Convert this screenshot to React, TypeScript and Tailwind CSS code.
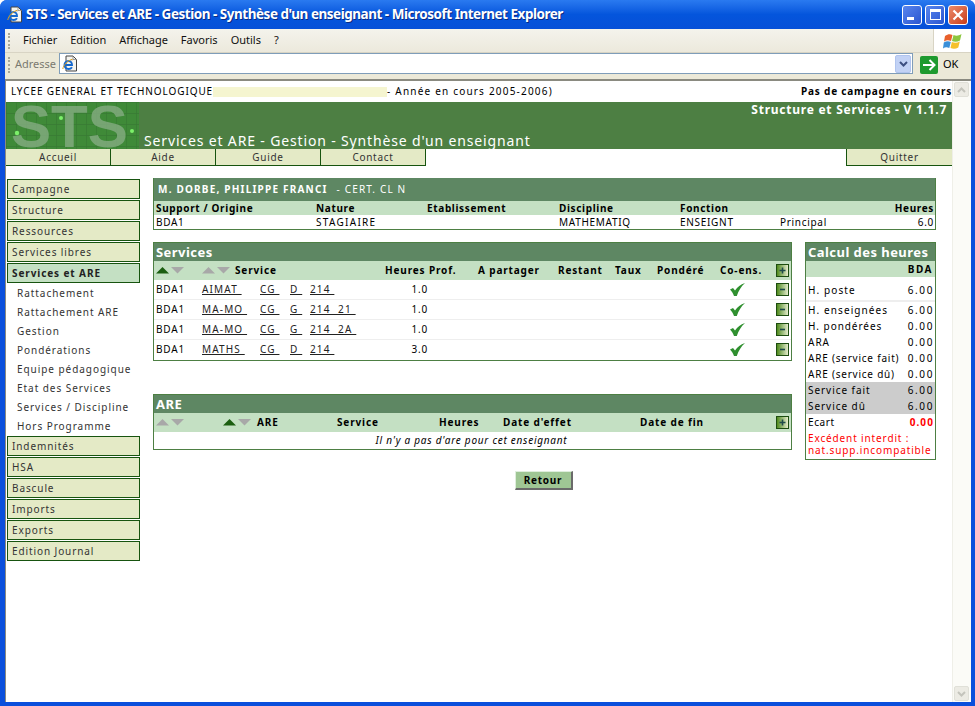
import type { ReactNode } from "react"

const sideTop = ["Campagne", "Structure", "Ressources", "Services libres"]
const sideSub = ["Rattachement", "Rattachement ARE", "Gestion", "Pondérations", "Equipe pédagogique", "Etat des Services", "Services / Discipline", "Hors Programme"]
const sideBottom = ["Indemnités", "HSA", "Bascule", "Imports", "Exports", "Edition Journal"]
const services = [
  { mat: "AIMAT ", gr: "D ", code: "214 ", h: "1.0" },
  { mat: "MA-MO ", gr: "G ", code: "214  21 ", h: "1.0" },
  { mat: "MA-MO ", gr: "G ", code: "214  2A ", h: "1.0" },
  { mat: "MATHS ", gr: "D ", code: "214 ", h: "3.0" },
]
const calcRows = [
  ["H. enseignées", "6.00", "tracking-[1.1px]"],
  ["H. pondérées", "0.00", "tracking-[0.95px]"],
  ["ARA", "0.00", "tracking-[1px]"],
  ["ARE (service fait)", "0.00", "tracking-[0.78px]"],
  ["ARE (service dû)", "0.00", "tracking-[0.78px]"],
]

function Arrows({ up = false }: { up?: boolean }) {
  return (
    <svg width="28" height="7" viewBox="0 0 28 7" className="shrink-0">
      <path d="M0 6.5 L6.5 0 L13 6.5 Z" fill={up ? "#1b5e10" : "#a8a8a8"} />
      <path d="M15 0 L28 0 L21.5 6.5 Z" fill="#a8a8a8" />
    </svg>
  )
}

function AddBtn({ minus = false }: { minus?: boolean }) {
  return (
    <div className="w-[13px] h-[13px] border border-[#1d4d10] bg-linear-to-r from-[#4f8a14] to-[#e6eccc] flex items-center justify-center">
      <svg width="7" height="7" viewBox="0 0 7 7">
        <path d={minus ? "M1 3.5H6" : "M0.5 3.5H6.5M3.5 0.5V6.5"} stroke="#1f4a4a" strokeWidth="1.6" />
      </svg>
    </div>
  )
}

function Check() {
  return (
    <svg width="15" height="13" viewBox="0 0 15 13" className="-mt-[1px]">
      <path d="M0 6.5 L3 5 L5 7.5 C7.5 4 10.5 1.5 15 0 C11 3.5 8.5 8 6.8 13 L4 13 C3.2 10.5 1.8 8.5 0 6.5 Z" fill="#2f8f2f" />
    </svg>
  )
}

function SideItem({ label, active = false }: { label: string; active?: boolean }) {
  return (
    <div className={`h-5 border border-[#17540f] pl-[4px] flex items-center tracking-[0.9px] ${active ? "bg-[#c4e0c3] font-bold text-[#222]" : "bg-[#e4eac6] text-[#333]"}`}>
      {label}
    </div>
  )
}

function PanelTitle({ children }: { children: ReactNode }) {
  return <div className="h-[18px] pt-[1px] bg-[#5e8763] text-white text-[13px] font-bold pl-[2px] flex items-center tracking-[0.45px]">{children}</div>
}

function Link({ text }: { text: string }) {
  return <span className="underline whitespace-pre tracking-[1.15px] text-[#222]">{text}</span>
}

function IeIcon() {
  return (
    <svg width="16" height="17" viewBox="0 0 16 17" className="shrink-0">
      <path d="M4 1H11L14.5 4.5V16H4Z" fill="#f4f4f0" stroke="#444" strokeWidth="1" />
      <path d="M10 5.5 V4.5 M11 1V4.5H14.5" fill="none" stroke="#888" strokeWidth="0.8" />
      <path d="M3 10H10C10 7.5 8.5 6 6.5 6C4.2 6 2.5 8 2.5 10C2.5 12.5 4.2 14 6.5 14C8 14 9.2 13.4 10 12.2" fill="none" stroke="#1468d0" strokeWidth="1.9" />
      <path d="M0.8 14C1.5 10 5.5 5.5 10.5 4.2" fill="none" stroke="#e0a020" strokeWidth="1" />
    </svg>
  )
}

export default function App() {
  return (
    <div className="w-[975px] h-[706px] overflow-hidden flex flex-col bg-[#0a4fdc] rounded-t-[7px] font-['DejaVu_Sans',sans-serif] text-[10px] text-black">
      {/* title bar */}
      <div className="h-[29px] shrink-0 bg-linear-to-b from-[#2a7af0] via-[#0455dc] to-[#0650d8] flex items-center pl-[7px] pr-[7px]">
        <IeIcon />
        <span className="ml-[3px] font-['Roboto',sans-serif] font-bold text-[13.5px] text-white tracking-[-0.48px] [text-shadow:1px_1px_0_#0a2a80] whitespace-pre">STS - Services et ARE - Gestion - Synthèse d'un enseignant - Microsoft Internet Explorer</span>
        <div className="ml-auto flex gap-[3px]">
          <div className="w-[20px] h-[20px] rounded-[3px] border border-white bg-linear-to-br from-[#5a86ee] to-[#2a55d0] flex items-end pl-1 pb-1">
            <div className="w-[7px] h-[3px] bg-white" />
          </div>
          <div className="w-[20px] h-[20px] rounded-[3px] border border-white bg-linear-to-br from-[#5a86ee] to-[#2a55d0] flex items-center justify-center">
            <div className="w-[11px] h-[11px] border border-white border-t-[3px]" />
          </div>
          <div className="w-[20px] h-[20px] rounded-[3px] border border-white bg-linear-to-br from-[#eb8a6a] to-[#c83a14] flex items-center justify-center">
            <svg width="12" height="12" viewBox="0 0 12 12"><path d="M1.5 1.5L10.5 10.5M10.5 1.5L1.5 10.5" stroke="#fff" strokeWidth="2.2" /></svg>
          </div>
        </div>
      </div>

      <div className="flex-1 ml-[5px] mr-[4px] mb-[4px] flex flex-col min-h-0 bg-[#ece9d8]">
        {/* menu bar */}
        <div className="h-[24px] shrink-0 bg-linear-to-b from-[#f4f3ec] to-[#ece9dc] border-b border-[#d8d4c4] flex items-center font-['Liberation_Sans',sans-serif] text-[11px]">
          <div className="ml-[3px] w-[3px] h-[16px] border-l-2 border-dotted border-[#a8a698]" />
          <div className="ml-[12px] flex gap-[13px] text-[#111]">
            <span>Fichier</span><span>Edition</span><span>Affichage</span><span>Favoris</span><span>Outils</span><span>?</span>
          </div>
          <div className="ml-auto w-[38px] h-full bg-white border-l border-[#d8d4c4] flex items-center justify-center">
            <svg width="20" height="18" viewBox="0 0 20 18">
              <path d="M2 4C5 2 7 2 9.5 3L8 9C5.5 8 3.5 8 1 9.5Z" fill="#e8602c" />
              <path d="M10.5 3C13 4 15.5 4 18.5 2L17 8.5C14.5 10 11.5 10 9 9Z" fill="#8cc63f" />
              <path d="M0.8 10.5C3.5 9 5.5 9 7.8 10L6.3 16C4 15 2 15 0 16.5Z" fill="#3a8fd8" />
              <path d="M8.8 10C11.5 11 14 11 16.8 9.5L15.3 15.5C12.8 17 10 17 7.5 16Z" fill="#f5c02c" />
            </svg>
          </div>
        </div>
        {/* address bar */}
        <div className="h-[26px] shrink-0 flex items-center font-['Liberation_Sans',sans-serif] text-[11px] bg-[#ece9d8]">
          <div className="ml-[3px] -mt-[3px] w-[3px] h-[16px] border-l-2 border-dotted border-[#a8a698]" />
          <span className="ml-[4px] -mt-[3px] text-[#7a7a70] w-[44px]">Adresse</span>
          <div className="w-[854px] h-[21px] -mt-[5px] bg-white border border-[#7f9db9] flex items-center pl-[2px] pr-[1px]">
            <IeIcon />
            <div className="ml-auto w-[16px] h-[18px] rounded-[2px] bg-[#c2d2f5] border border-[#b0c4ee] flex items-center justify-center">
              <svg width="9" height="6" viewBox="0 0 9 6"><path d="M1 1L4.5 4.5L8 1" fill="none" stroke="#3c4f80" strokeWidth="2" /></svg>
            </div>
          </div>
          <div className="ml-[7px] w-[18px] h-[18px] -mt-[3px] rounded-[2px] bg-[#1e9a2e] flex items-center justify-center">
            <svg width="14" height="12" viewBox="0 0 14 12"><path d="M1 6H12M7.5 1L12.5 6L7.5 11" fill="none" stroke="#fff" strokeWidth="2" /></svg>
          </div>
          <span className="ml-[5px] -mt-[3px]">OK</span>
        </div>

        {/* page */}
        <div className="flex-1 min-h-0 flex bg-white border-t-2 border-t-[#8a8a80] border-l border-l-[#8a8a80]">
          <div className="flex-1 min-w-0 flex flex-col">
            <div className="h-[21px] shrink-0 flex items-center pl-[5px] tracking-[0.9px] whitespace-pre">
              <span>LYCEE GENERAL ET TECHNOLOGIQUE</span>
              <span className="w-[174px] h-[10px] bg-[#f5f5d0]" />
              <span className="tracking-[1.2px]">- Année en cours 2005-2006)</span>
              <span className="ml-auto font-bold tracking-[0.8px]">Pas de campagne en cours</span>
            </div>
            <div className="h-[47px] shrink-0 bg-[#4d7f43] flex relative">
              <svg width="133" height="47" viewBox="0 0 133 47" className="shrink-0">
                <defs>
                  <pattern id="cells" width="10" height="11" patternUnits="userSpaceOnUse">
                    <rect width="10" height="11" fill="#3f8a38" />
                    <path d="M0 0H10M0 0V11" stroke="#387a33" strokeWidth="1.4" />
                  </pattern>
                </defs>
                <rect width="133" height="47" fill="url(#cells)" />
                <text x="5" y="45" fontFamily="Liberation Sans" fontWeight="700" fontSize="60" fill="#86ad84" fillOpacity="0.78" textLength="117" lengthAdjust="spacingAndGlyphs">STS</text>
                <circle cx="55" cy="16" r="2" fill="#7cf06a" />
                <circle cx="11" cy="31" r="2.2" fill="#7cf06a" />
                <circle cx="126" cy="29" r="2" fill="#7cf06a" />
              </svg>
              <span className="self-end ml-[5px] text-white text-[14px] tracking-[0.85px] leading-[17px] whitespace-pre">Services et ARE - Gestion - Synthèse d'un enseignant</span>
              <span className="absolute right-[5px] top-[1px] text-white font-bold text-[12px] leading-[14px] tracking-[0.75px]">Structure et Services - V 1.1.7</span>
            </div>
            <div className="h-[17px] shrink-0 flex text-[#333] tracking-[0.7px]">
              {["Accueil", "Aide", "Guide", "Contact"].map((t) => (
                <div key={t} className="w-[105px] bg-[#e4eac6] border-r border-b border-[#17540f] flex items-center justify-center">{t}</div>
              ))}
              <div className="ml-auto w-[106px] bg-[#e4eac6] border-l border-b border-[#17540f] flex items-center justify-center">Quitter</div>
            </div>

            <div className="flex-1 min-h-0 flex pl-[1px] pt-[13px]">
              {/* sidebar */}
              <div className="w-[133px] shrink-0 flex flex-col gap-[1px]">
                {sideTop.map((s) => <SideItem key={s} label={s} />)}
                <SideItem label="Services et ARE" active />
                <div className="flex flex-col -mb-[1px] pl-[10px] text-[#333] tracking-[0.95px]">
                  {sideSub.map((s) => <div key={s} className="h-[19px] flex items-center whitespace-nowrap">{s}</div>)}
                </div>
                {sideBottom.map((s) => <SideItem key={s} label={s} />)}
              </div>

              {/* main */}
              <div className="w-[783px] ml-[13px] shrink-0 flex flex-col">
                <div className="border border-[#4d7f43] border-t-0 h-[52px] flex flex-col -mt-[1px]">
                  <div className="h-[23px] bg-[#5e8763] text-white font-bold pl-[4px] flex items-center tracking-[1.2px] whitespace-pre">
                    M. DORBE, PHILIPPE FRANCI<span className="ml-[9px] font-normal tracking-[1.15px]">- CERT. CL N</span>
                  </div>
                  <div className="h-[14px] bg-[#c4e0c3] font-bold grid grid-cols-[160px_111px_132px_121px_100px_1fr] items-center pl-[2px] pr-[1px] tracking-[0.65px]">
                    <span>Support / Origine</span><span>Nature</span><span>Etablissement</span><span>Discipline</span><span>Fonction</span><span className="text-right">Heures</span>
                  </div>
                  <div className="h-[14px] grid grid-cols-[160px_111px_132px_121px_100px_1fr] items-center pl-[2px] pr-[1px] tracking-[0.7px]">
                    <span>BDA1</span><span className="tracking-[1.3px]">STAGIAIRE</span><span /><span>MATHEMATIQ</span><span>ENSEIGNT</span>
                    <span className="flex justify-between"><span>Principal</span><span>6.0</span></span>
                  </div>
                </div>

                <div className="flex mt-[12px] items-start">
                  <div className="w-[639px] shrink-0 flex flex-col">
                    {/* services */}
                    <div className="border border-[#4d7f43] h-[119px] flex flex-col">
                      <PanelTitle>Services</PanelTitle>
                      <div className="h-[19px] bg-[#c4e0c3] font-bold flex items-center pl-[2px] tracking-[0.85px] whitespace-nowrap">
                        <div className="w-[46px]"><Arrows up /></div>
                        <Arrows />
                        <span className="ml-[5px] w-[150px]">Service</span>
                        <span className="w-[93px]">Heures Prof.</span>
                        <span className="w-[80px]">A partager</span>
                        <span className="w-[57px]">Restant</span>
                        <span className="w-[42px]">Taux</span>
                        <span className="w-[63px]">Pondéré</span>
                        <span className="w-[56px]">Co-ens.</span>
                        <AddBtn />
                      </div>
                      {services.map((r, i) => (
                        <div key={i} className={`h-5 grid grid-cols-[46px_58px_30px_20px_118px_302px_46px_13px] items-center pl-[2px] tracking-[0.8px] border-b ${i < 3 ? "border-[#eeeeee]" : "border-transparent"}`}>
                          <span>BDA1</span>
                          <Link text={r.mat} />
                          <Link text="CG " />
                          <Link text={r.gr} />
                          <span className="flex justify-between">
                            <Link text={r.code} />
                            <span>{r.h}</span>
                          </span>
                          <span />
                          <span className="flex"><Check /></span>
                          <AddBtn minus />
                        </div>
                      ))}
                    </div>

                    {/* are */}
                    <div className="border border-[#4d7f43] h-[56px] mt-[33px] flex flex-col">
                      <PanelTitle>ARE</PanelTitle>
                      <div className="h-[19px] bg-[#c4e0c3] font-bold flex items-center pl-[2px] tracking-[0.85px] whitespace-nowrap">
                        <div className="w-[67px]"><Arrows /></div>
                        <Arrows up />
                        <span className="ml-[6px] w-[80px]">ARE</span>
                        <span className="w-[102px]">Service</span>
                        <span className="w-[64px]">Heures</span>
                        <span className="w-[137px]">Date d'effet</span>
                        <span className="w-[136px]">Date de fin</span>
                        <AddBtn />
                      </div>
                      <div className="flex-1 flex items-center justify-center italic tracking-[0.75px] -mt-[1px] pr-[2px]">Il n'y a pas d'are pour cet enseignant</div>
                    </div>

                    <div className="mt-[21px] flex justify-center pl-[142px]">
                      <div className="w-[58px] h-[19px] bg-[#9fc694] border-r-2 border-b-2 border-r-[#6a6a6a] border-b-[#6a6a6a] border-t border-l border-t-[#dfeedd] border-l-[#dfeedd] font-bold tracking-[0.7px] flex items-center justify-center">Retour</div>
                    </div>
                  </div>

                  {/* calcul */}
                  <div className="w-[131px] ml-[13px] border border-[#4d7f43] h-[218px] flex flex-col">
                    <PanelTitle>Calcul des heures</PanelTitle>
                    <div className="h-[16px] bg-[#c4e0c3] font-bold text-right pr-[2px] leading-[16px] tracking-[1.5px]">BDA</div>
                    <div className="h-[25px] pt-[3px] border-b-2 border-[#eeeeee] flex items-center justify-between pl-[2px] pr-[1px] tracking-[1.1px]"><span>H. poste</span><span className="tracking-[1.6px]">6.00</span></div>
                    {calcRows.map(([k, v, t]) => (
                      <div key={k} className="h-[16px] flex items-center justify-between pl-[2px] pr-[1px] whitespace-pre"><span className={t}>{k}</span><span className="tracking-[1.6px]">{v}</span></div>
                    ))}
                    <div className="h-[16px] bg-[#cccccc] flex items-center justify-between pl-[2px] pr-[1px] tracking-[0.95px]"><span>Service fait</span><span className="tracking-[1.6px]">6.00</span></div>
                    <div className="h-[16px] bg-[#cccccc] flex items-center justify-between pl-[2px] pr-[1px] tracking-[0.95px]"><span>Service dû</span><span className="tracking-[1.6px]">6.00</span></div>
                    <div className="h-[16px] flex items-center justify-between pl-[2px] pr-[1px] tracking-[0.6px]"><span>Ecart</span><span className="font-bold text-[#ff0000] tracking-[1.1px]">0.00</span></div>
                    <div className="text-[#ff0000] pl-[2px] leading-[12px] mt-[2px] tracking-[0.87px] whitespace-pre">Excédent interdit :{"\n"}nat.supp.incompatible</div>
                  </div>
                </div>
              </div>
            </div>
          </div>

          {/* scrollbar */}
          <div className="w-[19px] shrink-0 bg-[#fbfbf7] border-l border-[#efefe8] flex flex-col justify-between py-[1px] pl-[1px]">
            <div className="w-[15px] h-[15px] rounded-[2px] bg-[#ecebe4] border border-[#e0e0d8] flex items-center justify-center">
              <svg width="9" height="6" viewBox="0 0 9 6"><path d="M1 5L4.5 1.5L8 5" fill="none" stroke="#c4c4bc" strokeWidth="2" /></svg>
            </div>
            <div className="w-[15px] h-[15px] rounded-[2px] bg-[#ecebe4] border border-[#e0e0d8] flex items-center justify-center">
              <svg width="9" height="6" viewBox="0 0 9 6"><path d="M1 1L4.5 4.5L8 1" fill="none" stroke="#c4c4bc" strokeWidth="2" /></svg>
            </div>
          </div>
        </div>
      </div>
    </div>
  )
}
